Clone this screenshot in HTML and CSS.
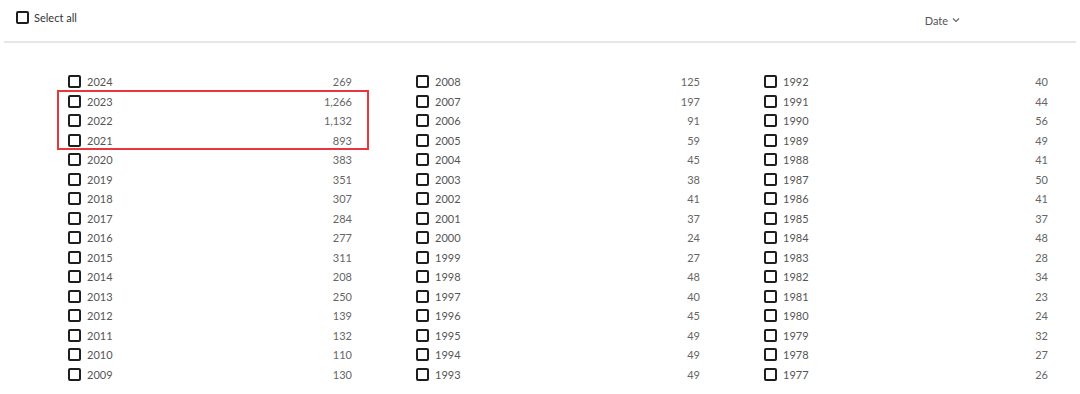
FILE: index.html
```html
<!DOCTYPE html>
<html>
	<head>
		<meta charset="utf-8">
		<title>Date filter</title>
		<link rel="stylesheet" href="styles.css">
	</head>
	<body>
		<div class="toolbar">
			<label class="select-all"><span class="box"></span>Select all</label>
			<a href="javascript:void(0)" class="sort">Date <svg width="8" height="6" viewBox="0 0 8 6"><path d="M1 1.5l3 3 3-3" fill="none" stroke="#666" stroke-width="1.2"/></svg></a>
		</div>
		<div class="years">
			<ul class="col">
				<li><span class="box"></span><span class="year">2024</span><span class="count">269</span></li>
				<li><span class="box"></span><span class="year">2023</span><span class="count">1,266</span></li>
				<li><span class="box"></span><span class="year">2022</span><span class="count">1,132</span></li>
				<li><span class="box"></span><span class="year">2021</span><span class="count">893</span></li>
				<li><span class="box"></span><span class="year">2020</span><span class="count">383</span></li>
				<li><span class="box"></span><span class="year">2019</span><span class="count">351</span></li>
				<li><span class="box"></span><span class="year">2018</span><span class="count">307</span></li>
				<li><span class="box"></span><span class="year">2017</span><span class="count">284</span></li>
				<li><span class="box"></span><span class="year">2016</span><span class="count">277</span></li>
				<li><span class="box"></span><span class="year">2015</span><span class="count">311</span></li>
				<li><span class="box"></span><span class="year">2014</span><span class="count">208</span></li>
				<li><span class="box"></span><span class="year">2013</span><span class="count">250</span></li>
				<li><span class="box"></span><span class="year">2012</span><span class="count">139</span></li>
				<li><span class="box"></span><span class="year">2011</span><span class="count">132</span></li>
				<li><span class="box"></span><span class="year">2010</span><span class="count">110</span></li>
				<li><span class="box"></span><span class="year">2009</span><span class="count">130</span></li>
				<div class="highlight"></div>
			</ul>
			<ul class="col">
				<li><span class="box"></span><span class="year">2008</span><span class="count">125</span></li>
				<li><span class="box"></span><span class="year">2007</span><span class="count">197</span></li>
				<li><span class="box"></span><span class="year">2006</span><span class="count">91</span></li>
				<li><span class="box"></span><span class="year">2005</span><span class="count">59</span></li>
				<li><span class="box"></span><span class="year">2004</span><span class="count">45</span></li>
				<li><span class="box"></span><span class="year">2003</span><span class="count">38</span></li>
				<li><span class="box"></span><span class="year">2002</span><span class="count">41</span></li>
				<li><span class="box"></span><span class="year">2001</span><span class="count">37</span></li>
				<li><span class="box"></span><span class="year">2000</span><span class="count">24</span></li>
				<li><span class="box"></span><span class="year">1999</span><span class="count">27</span></li>
				<li><span class="box"></span><span class="year">1998</span><span class="count">48</span></li>
				<li><span class="box"></span><span class="year">1997</span><span class="count">40</span></li>
				<li><span class="box"></span><span class="year">1996</span><span class="count">45</span></li>
				<li><span class="box"></span><span class="year">1995</span><span class="count">49</span></li>
				<li><span class="box"></span><span class="year">1994</span><span class="count">49</span></li>
				<li><span class="box"></span><span class="year">1993</span><span class="count">49</span></li>
			</ul>
			<ul class="col">
				<li><span class="box"></span><span class="year">1992</span><span class="count">40</span></li>
				<li><span class="box"></span><span class="year">1991</span><span class="count">44</span></li>
				<li><span class="box"></span><span class="year">1990</span><span class="count">56</span></li>
				<li><span class="box"></span><span class="year">1989</span><span class="count">49</span></li>
				<li><span class="box"></span><span class="year">1988</span><span class="count">41</span></li>
				<li><span class="box"></span><span class="year">1987</span><span class="count">50</span></li>
				<li><span class="box"></span><span class="year">1986</span><span class="count">41</span></li>
				<li><span class="box"></span><span class="year">1985</span><span class="count">37</span></li>
				<li><span class="box"></span><span class="year">1984</span><span class="count">48</span></li>
				<li><span class="box"></span><span class="year">1983</span><span class="count">28</span></li>
				<li><span class="box"></span><span class="year">1982</span><span class="count">34</span></li>
				<li><span class="box"></span><span class="year">1981</span><span class="count">23</span></li>
				<li><span class="box"></span><span class="year">1980</span><span class="count">24</span></li>
				<li><span class="box"></span><span class="year">1979</span><span class="count">32</span></li>
				<li><span class="box"></span><span class="year">1978</span><span class="count">27</span></li>
				<li><span class="box"></span><span class="year">1977</span><span class="count">26</span></li>
			</ul>
		</div>
	</body>
</html>
```

FILE: styles.css
```css
*{margin:0;padding:0;box-sizing:border-box;}
ul{list-style:none;}
a{text-decoration:none;}
body{background:#fff;font-family:Lato,"Liberation Sans",sans-serif;font-size:11px;color:#333;}

.box{display:inline-block;width:13px;height:13px;border:2px solid #1e1e1e;border-radius:2px;flex:none;}

.toolbar{display:flex;justify-content:space-between;align-items:center;height:43px;margin:0 4px;padding:0 116px 0 12px;border-bottom:2px solid #e6e6e6;}
.select-all{display:flex;align-items:center;gap:5px;margin-top:-7px;color:#333;}
.sort{display:flex;align-items:center;gap:4px;color:#555;margin-top:-1px;}

.years{display:grid;grid-template-columns:repeat(3,284px);column-gap:64px;padding:29px 0 0 68px;}
.col{position:relative;}
.col>li{display:flex;align-items:center;height:19.5px;}
.col .year{margin-left:6px;color:#555;}
.col .count{margin-left:auto;color:#666;}

.highlight{position:absolute;left:-11px;top:18px;width:312px;height:60px;border:2px solid #e8373d;}
```
